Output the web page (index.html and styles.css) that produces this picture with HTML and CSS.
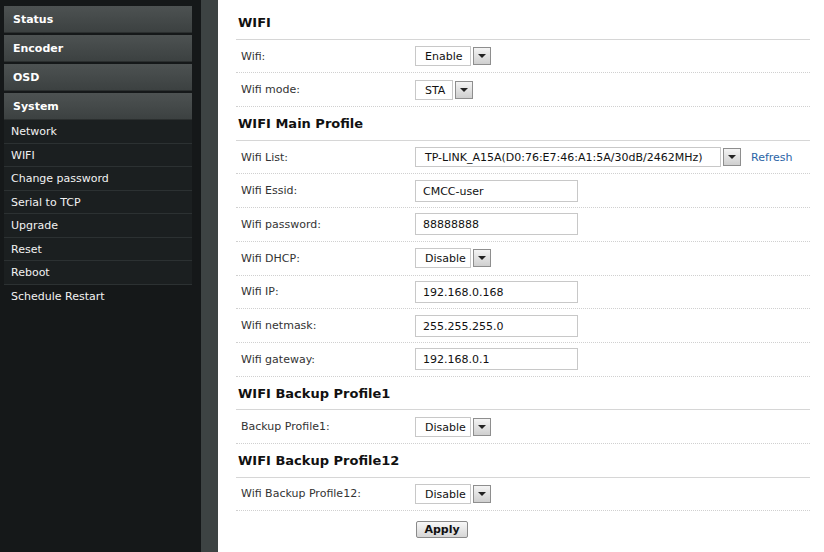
FILE: index.html
```html
<!DOCTYPE html>
<html lang="en">
<head>
  <meta charset="UTF-8">
  <title>WIFI</title>
  <link rel="stylesheet" href="styles.css">
</head>
<body>
  <div class="page">
    <div class="sidebar">
      <div class="menu">Status</div>
      <div class="menu">Encoder</div>
      <div class="menu">OSD</div>
      <div class="menu">System</div>
      <ul class="submenu">
        <li>Network</li>
        <li>WIFI</li>
        <li>Change password</li>
        <li>Serial to TCP</li>
        <li>Upgrade</li>
        <li>Reset</li>
        <li>Reboot</li>
        <li>Schedule Restart</li>
      </ul>
    </div>
    <div class="strip"></div>

    <div class="content">
      <h3>WIFI</h3>
      <div class="row">
        <label>Wifi:</label>
        <span class="select"><span class="val w55">Enable</span><span class="arrow"></span></span>
      </div>
      <div class="row">
        <label>Wifi mode:</label>
        <span class="select"><span class="val w37">STA</span><span class="arrow"></span></span>
      </div>

      <h3>WIFI Main Profile</h3>
      <div class="row">
        <label>Wifi List:</label>
        <span class="select"><span class="val wide">TP-LINK_A15A(D0:76:E7:46:A1:5A/30dB/2462MHz)</span><span class="arrow"></span></span>
        <a class="refresh">Refresh</a>
      </div>
      <div class="row">
        <label>Wifi Essid:</label>
        <span class="text">CMCC-user</span>
      </div>
      <div class="row">
        <label>Wifi password:</label>
        <span class="text">88888888</span>
      </div>
      <div class="row">
        <label>Wifi DHCP:</label>
        <span class="select"><span class="val w55">Disable</span><span class="arrow"></span></span>
      </div>
      <div class="row">
        <label>Wifi IP:</label>
        <span class="text">192.168.0.168</span>
      </div>
      <div class="row">
        <label>Wifi netmask:</label>
        <span class="text">255.255.255.0</span>
      </div>
      <div class="row">
        <label>Wifi gateway:</label>
        <span class="text">192.168.0.1</span>
      </div>

      <h3>WIFI Backup Profile1</h3>
      <div class="row">
        <label>Backup Profile1:</label>
        <span class="select"><span class="val w55">Disable</span><span class="arrow"></span></span>
      </div>

      <h3>WIFI Backup Profile12</h3>
      <div class="row">
        <label>Wifi Backup Profile12:</label>
        <span class="select"><span class="val w55">Disable</span><span class="arrow"></span></span>
      </div>

      <div class="actions">
        <button>Apply</button>
      </div>
    </div>
  </div>
</body>
</html>
```

FILE: styles.css
```css
body {
  margin: 0;
  font-family: "DejaVu Sans", Verdana, sans-serif;
  font-size: 11px;
  color: #222;
  background: #fff;
}
.page {
  display: flex;
  min-height: 552px;
}
.sidebar {
  width: 201px;
  background-color: #151819;
  padding-top: 6px;
  box-sizing: border-box;
}
.strip {
  width: 17px;
  background-color: #3d4343;
}
.menu {
  margin: 0 9px 2px 4px;
  height: 27px;
  line-height: 28px;
  padding-left: 9px;
  color: #fff;
  font-weight: bold;
  background: linear-gradient(#4d5252, #3c4141);
  border-bottom: 1px solid #2b2f2f;
  box-sizing: border-box;
}
.menu:last-of-type {
  margin-bottom: 0;
}
.submenu {
  list-style: none;
  margin: 0 9px 0 4px;
  padding: 0;
}
.submenu li {
  height: 23.5px;
  line-height: 23px;
  padding-left: 7px;
  color: #f2f2f2;
  background: #1b1f20;
  border-bottom: 1px solid #2c3132;
  box-sizing: border-box;
}
.submenu li:last-child {
  border-bottom: none;
  background: none;
}
.content {
  flex: 1;
  padding: 6px 14px 0 18px;
}
h3 {
  margin: 0;
  height: 33.7px;
  line-height: 34px;
  padding-left: 2px;
  font-size: 13px;
  color: #111;
  border-bottom: 1px solid #d6d6d6;
  box-sizing: border-box;
}
.row {
  display: flex;
  align-items: center;
  height: 33.7px;
  padding-left: 5px;
  border-bottom: 1px dotted #d0d0d0;
  box-sizing: border-box;
}
.row label {
  width: 174px;
  color: #333;
}
.select {
  display: flex;
  align-items: center;
}
.val {
  height: 20px;
  line-height: 20px;
  padding-left: 9px;
  border: 1px solid #c8c8c8;
  box-sizing: border-box;
  color: #111;
}
.w55 { width: 56px; }
.w37 { width: 38px; }
.wide { width: 306px; }
.arrow {
  width: 18px;
  height: 18px;
  margin-left: 2px;
  border: 1px solid #8e8e8e;
  box-sizing: border-box;
  background: linear-gradient(#f4f4f4, #cfcfcf);
  position: relative;
}
.arrow::after {
  content: "";
  position: absolute;
  left: 4px;
  top: 6px;
  border-left: 4px solid transparent;
  border-right: 4px solid transparent;
  border-top: 4px solid #222;
}
.refresh {
  margin-left: 10px;
  color: #2a64a6;
}
.text {
  width: 163px;
  height: 22px;
  line-height: 21px;
  padding-left: 7px;
  border: 1px solid #c8c8c8;
  box-sizing: border-box;
  color: #111;
}
.actions {
  padding: 10px 0 0 180px;
}
button {
  width: 52px;
  height: 17px;
  padding: 0;
  font-family: inherit;
  font-size: 11px;
  font-weight: bold;
  color: #111;
  border: 1px solid #8a8a8a;
  border-radius: 2px;
  background: linear-gradient(#f8f8f8, #d6d6d6);
}
```
